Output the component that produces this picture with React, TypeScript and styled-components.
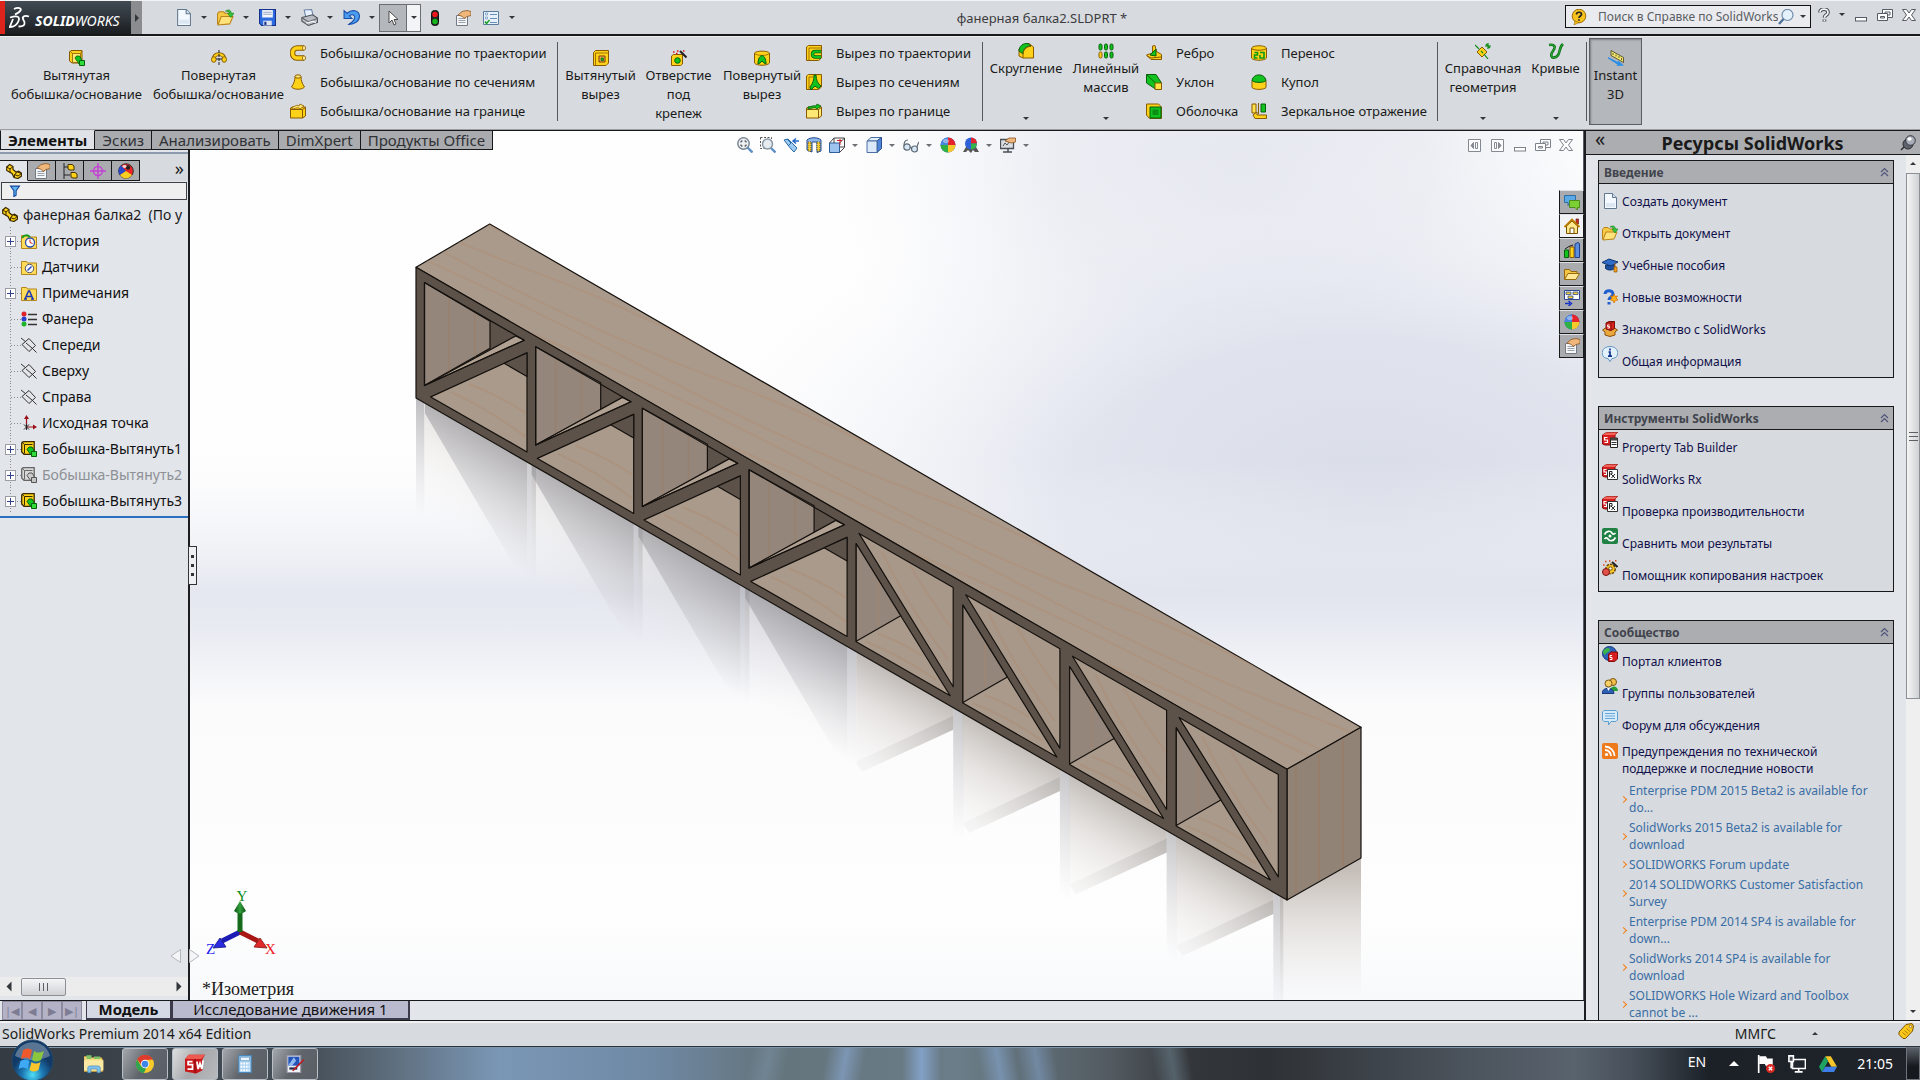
import React from "react";
import styled, { createGlobalStyle, css } from "styled-components";

const GlobalStyle = createGlobalStyle`
  * { box-sizing: border-box; }
  body { margin: 0; overflow: hidden; }
  button, input { font: inherit; color: inherit; }
  button { background: none; border: 0; padding: 0; cursor: default; }
  a { color: inherit; text-decoration: none; }
  ul { list-style: none; margin: 0; padding: 0; }
  h1, h2, p { margin: 0; }
`;

/* ---------- icons, all drawn on a 16 x 16 grid ---------- */

const Y = "#ffd21a";
const YD = "#8a5a00";
const G = "#12c21e";
const GD = "#08600c";

const icons: Record<string, React.ReactNode> = {
  newDoc: (
    <>
      <path d="M2.5.5h8l4 4v11h-12z" fill="#f4f9ff" stroke="#61788f" />
      <path d="M10.500.5v4h4" fill="#cfe0f0" stroke="#61788f" />
      <path d="M4 10h9v4H4z" fill="#dbe7f3" />
    </>
  ),
  open: (
    <>
      <path d="M.5 14.500V4.500l1.500-2h4l1.500 1.500h5v3" fill="#f6c945" stroke="#b9821a" />
      <path d="M1 15l3-8h11l-3 7z" fill="#ffe27a" stroke="#b9821a" />
      <path d="M8 2c3-2 5-1 5.500 2H16l-3 4-3-4h2C11.500 2.500 10 2 8 2z" fill="#35c63b" stroke="#128019" strokeWidth=".6" />
    </>
  ),
  save: (
    <>
      <path d="M.5.5h15v15h-13l-2-2z" fill="#2d6ce0" stroke="#16318a" />
      <path d="M3 1h10v7H3z" fill="#f4f6fb" />
      <path d="M4 3h8M4 5h8" stroke="#9aa8c4" />
      <path d="M4 11h8v4.500H4z" fill="#dfe4ee" />
      <path d="M5 12h2v3H5z" fill="#16318a" />
    </>
  ),
  print: (
    <>
      <path d="M3 1l7-.5 1.500 6-7 1z" fill="#e6f1ff" stroke="#6d84a8" />
      <path d="M.8 8L11 5.500l4.500 3v4L7 15.500l-6.200-4z" fill="#b9bcc2" stroke="#4d5259" />
      <path d="M1 8.500l6 3.500 8.500-3" fill="none" stroke="#63686f" />
      <path d="M5 13.500l6-2 3 1.500" fill="none" stroke="#fff" />
    </>
  ),
  undo: (
    <path
      d="M1 1.500v7.500h7.500L6 6.500C8.500 4.500 11.500 5.500 11 8.500c-.6 2.500-3 4-5.500 6C11 14.500 15.500 11.500 15.500 6.500 15 1 8.500 0 3.700 4z"
      fill="#4b9cf0"
      stroke="#1650a8"
    />
  ),
  cursor: <path d="M4 1v12l3-3 2 5 2-1-2-4.500h4z" fill="#fff" stroke="#3c3c3c" strokeWidth=".9" />,
  traffic: (
    <>
      <rect x="4.500" y=".5" width="7" height="15" rx="3" fill="#222" stroke="#111" />
      <circle cx="8" cy="4.500" r="2.700" fill="#f0151c" />
      <circle cx="8" cy="11.500" r="2.700" fill="#15b81c" />
    </>
  ),
  props: (
    <>
      <path d="M1.500 5.500h11v10h-11z" fill="#f5f6f8" stroke="#737a84" />
      <path d="M3.500 8.500h7M3.500 10.500h7M3.500 12.500h7" stroke="#98a0ab" />
      <path d="M3 5l4-3.500 5-1 4 1v4l-4 1-3 2-1.500-2L6 6z" fill="#efb77b" stroke="#8a5524" strokeWidth=".8" />
    </>
  ),
  options: (
    <>
      <path d="M.5 1.500h15v13H.5z" fill="#e7f1fb" stroke="#5b7c9e" />
      <path d="M7 4.500h7M7 8.500h7M7 12.500h7" stroke="#6b8fb6" />
      <path d="M2.500 3h2v2h-2zM2.500 7h2v2h-2z" fill="#fff" stroke="#6b8fb6" strokeWidth=".7" />
      <path d="M2 11.500l1.500 2 3-3.500" fill="none" stroke="#19a321" strokeWidth="1.500" />
    </>
  ),
  boss: (
    <>
      <path d="M.5 2l1.500-1.500h11V11l-2 2H3l-2.500-2z" fill={Y} stroke={YD} />
      <path d="M3.500 3.500h8v9h-8zM.8 1l2.700 2.500M11.500 3.500l1.500-2.500" fill="#ffe873" stroke={YD} strokeWidth=".8" />
      <path d="M6 8l1.500-2h3l2 3v2L10 14z" fill={G} stroke={GD} strokeWidth=".8" />
      <path d="M10.500 10.500h5v5h-5z" fill="#2fdc3a" stroke={GD} />
    </>
  ),
  revolve: (
    <>
      <path d="M2.500 9c1-6.500 10-6.500 11 0" fill="none" stroke={YD} strokeWidth="3.600" />
      <path d="M2.500 9c1-6.500 10-6.500 11 0" fill="none" stroke={Y} strokeWidth="2" />
      <ellipse cx="2.800" cy="9.500" rx="2.300" ry="2.800" fill={Y} stroke={YD} />
      <ellipse cx="13.200" cy="9.500" rx="2.300" ry="2.800" fill={Y} stroke={YD} />
      <path d="M5 9h6" stroke="#222" />
      <path d="M8 0v16" stroke="#222" strokeDasharray="3 1" />
    </>
  ),
  sweep: (
    <>
      <path d="M14 3H7C1 3 1 13 7 13h7" fill="none" stroke={YD} strokeWidth="5.500" />
      <path d="M14 3H7C1 3 1 13 7 13h7" fill="none" stroke={Y} strokeWidth="3.600" />
      <ellipse cx="14" cy="3" rx="1.600" ry="2.200" fill="#ffef9c" stroke={YD} strokeWidth=".8" />
      <ellipse cx="14" cy="13" rx="1.600" ry="2.200" fill="#ffef9c" stroke={YD} strokeWidth=".8" />
    </>
  ),
  loft: (
    <>
      <path d="M5 2.500C5 7 4 9 1.500 13c3 3 10 3 13 0C12 9 11 7 11 2.500z" fill={Y} stroke={YD} />
      <ellipse cx="8" cy="2.500" rx="3" ry="1.700" fill="#ffe873" stroke={YD} />
    </>
  ),
  boundary: (
    <>
      <path d="M.5 5l2-1h13v9l-3 2H.5z" fill={Y} stroke={YD} />
      <path d="M.5 6.500h12V15M12.500 6.500l3-2" fill="none" stroke={YD} />
      <path d="M2 4c3 0 4-3 7-1l1-2 4 2-4 3-1-1C7 4 5 6 2 6z" fill="#ffe873" stroke={YD} strokeWidth=".8" />
    </>
  ),
  cut: (
    <>
      <path d="M.5 2.500l2-2h13V13l-2.500 2.500H.5z" fill={Y} stroke={YD} />
      <path d="M2.500 3h13M2.500 3v12" stroke={YD} strokeWidth=".8" fill="none" />
      <path d="M6 6h6v6H6z" fill="#f0b060" stroke="#7a3a00" />
      <path d="M8 8h2.500v2.500H8z" fill={G} stroke={GD} strokeWidth=".7" />
    </>
  ),
  hole: (
    <>
      <path d="M.5 6l2-1.500h9V14l-2 1.500h-9z" fill={Y} stroke={YD} />
      <circle cx="6.500" cy="10.500" r="2.800" fill={G} stroke={GD} />
      <path d="M9 1l6.500 6.500" stroke="#222" strokeWidth="2" />
      <path d="M2 2h1.500M6 1h1.500M5 3.500h1.500M12 1h1.500" stroke="#e01616" strokeWidth="1.500" />
    </>
  ),
  revCut: (
    <>
      <path d="M.5 3v10c2 3 13 3 15 0V3c-2-2.500-13-2.500-15 0z" fill={Y} stroke={YD} />
      <path d="M.5 3.500c3 2.500 12 2.500 15 0" fill="none" stroke={YD} strokeWidth=".8" />
      <path d="M4 14c0-6 2-8 4-8.500C10 6 12 8 12 14l-2-1-2-2-2 2z" fill={G} stroke={GD} />
    </>
  ),
  sweepCut: (
    <>
      <path d="M.5 2l2-1.500h13V13l-3 2.500H.5z" fill={Y} stroke={YD} />
      <path d="M3 3h12M3 3v12" stroke={YD} strokeWidth=".8" fill="none" />
      <path d="M15 6.500H9.500c-4 0-4 5.500 0 5.500H15" fill="none" stroke={GD} strokeWidth="3.400" />
      <path d="M15 6.500H9.500c-4 0-4 5.500 0 5.500H15" fill="none" stroke={G} strokeWidth="2" />
    </>
  ),
  loftCut: (
    <>
      <path d="M.5 2l2-1.500h13V13l-3 2.500H.5z" fill={Y} stroke={YD} />
      <path d="M3 3h4M3 3v12" stroke={YD} strokeWidth=".8" fill="none" />
      <path d="M8 1h2c0 5 2 9 5 11l-2.500 2.500L9 12l-4 4-1-3C7 9 8 6 8 1z" fill={G} stroke={GD} />
    </>
  ),
  boundaryCut: (
    <>
      <path d="M.5 5l2-1h13v9l-3 2H.5z" fill="#ffe873" stroke={YD} />
      <path d="M.5 6.500h12V15M12.500 6.500l3-2" fill="none" stroke={YD} />
      <path d="M2 4c3 0 5-2 8-1l1-2 4 2-4 3-1-1C7 4 5 6 2 6z" fill={G} stroke={GD} strokeWidth=".8" />
    </>
  ),
  fillet: (
    <>
      <path d="M1 6l4-4 6-1.500L15.500 4v11H5L1 13z" fill={Y} stroke={YD} />
      <path d="M1 8c0-5 4-8 9-7.500L13 3C8 3 5 6 5 11z" fill={G} stroke={GD} />
      <path d="M5 15V11c0-4 3-7 8-8" fill="none" stroke={YD} />
    </>
  ),
  pattern: (
    <>
      {[2.5, 8, 13.5].map((x) =>
        [4, 12].map((y) => (
          <rect
            key={x + "-" + y}
            x={x - 1.5}
            y={y - 3}
            width="3"
            height="6"
            rx="1.400"
            fill={x === 2.5 && y === 12 ? Y : G}
            stroke={x === 2.5 && y === 12 ? YD : GD}
          />
        ))
      )}
    </>
  ),
  rib: (
    <>
      <path d="M.5 10l6-2V1L9 .5l1.500 6 5 3v5H5z" fill={Y} stroke={YD} />
      <path d="M4 10l6-6v7z" fill={G} stroke={GD} />
      <path d="M1 11l4 2 10-1" stroke={YD} fill="none" />
    </>
  ),
  draft: (
    <>
      <path d="M.5.5h9.500l5.500 8.500-6 6-9-6z" fill={G} stroke={GD} />
      <path d="M.5.5L9.500 9" stroke={GD} />
      <path d="M9 9h6.500v6.500H9z" fill="#ffe14a" stroke={YD} />
    </>
  ),
  shell: (
    <>
      <path d="M.5 1h12l3 3v11.500h-12L.5 12z" fill={Y} stroke={YD} />
      <path d="M4 4h11v11H4z" fill={G} stroke={GD} />
      <path d="M6.500 6.500h6V12h-6z" fill="#0a8f14" />
    </>
  ),
  wrap: (
    <>
      <path d="M.5 3v10c2 3 13 3 15 0V3c-2-3-13-3-15 0z" fill={Y} stroke={YD} />
      <path d="M.5 3.500c3 2.300 12 2.300 15 0" fill="none" stroke={YD} />
      <path d="M3.500 7.500h3v2.500h-3v3h3M9 7.500h4v5.500H9v-3" fill="none" stroke="#0a9a14" strokeWidth="1.600" />
    </>
  ),
  dome: (
    <>
      <path d="M1 6.500v7c2 2.500 12 2.500 14 0v-7z" fill={Y} stroke={YD} />
      <path d="M1 6.500C2-1 14-1 15 6.500c-2 2.500-12 2.500-14 0z" fill={G} stroke={GD} />
    </>
  ),
  mirror: (
    <>
      <path d="M1 1h4v9H1z" fill="#ffe14a" stroke={YD} />
      <path d="M10 1h4.500v8H10z" fill={G} stroke={GD} />
      <path d="M2 12l4-3v3h9.500v3.500H4z" fill={Y} stroke={YD} />
      <path d="M7.500 0v11" stroke={YD} />
    </>
  ),
  refGeom: (
    <>
      <path d="M7 4l5 5-5 5-5-5z" fill={Y} stroke={YD} />
      <path d="M0 2l4 4M9 11l4 5M6 8l2 2M13 0v6M10 3h6M11 1l4 4" stroke="#0d8b14" strokeWidth="1.200" />
    </>
  ),
  curves: (
    <>
      <path d="M1 2c6-1 7 2 4 6s-2 8 3 6 2-9 7-13" fill="none" stroke="#0b7014" strokeWidth="2.600" />
      <path d="M1 2c6-1 7 2 4 6s-2 8 3 6 2-9 7-13" fill="none" stroke="#2cb33a" strokeWidth="1" />
    </>
  ),
  instant: (
    <>
      <path d="M3 .5l12.500 7v5L3 5.500z" fill="#f5e96b" stroke="#3e3a20" strokeWidth=".8" />
      <path d="M5 3v2M8 4.500v2M11 6v2M13.500 8v2" stroke="#3e3a20" strokeWidth=".8" />
      <path d="M0 7l10 5v-1.500l6 5-7.500.5 1-1.500-9.500-6z" fill="#2b8fe6" />
    </>
  ),
  part: (
    <>
      <path d="M.7 4l3-2.500L7 3.500V6.500l3 2.500 2.500-.8 3 2V13l-3.500 2.500-4-1-2-4-5.300-3z" fill={Y} stroke="#3a2900" strokeWidth="1.200" />
      <path d="M.7 4L4 6v3.500M4 6l3-2.500M8.500 11.500l3-2.500 4 1.500M8.500 11.500v3M8.500 11.500l3.500 1.500 3.500-2.500" fill="none" stroke="#3a2900" />
    </>
  ),
  config: (
    <>
      <path d="M2 0v16M2 4h4M2 12h6" stroke="#222" fill="none" />
      <path d="M6 1.500h4l2 1.500v4H8L6 6z" fill={Y} stroke="#4a3400" />
      <path d="M9 9.500h4l2 1.500v4h-4L9 14z" fill={Y} stroke="#4a3400" />
    </>
  ),
  target: (
    <g fill="none" stroke="#c63fd6" strokeWidth="1.400">
      <circle cx="8" cy="8" r="4.500" />
      <path d="M8 0v16M0 8h16" />
    </g>
  ),
  ball: (
    <>
      <circle cx="8" cy="8" r="7.500" fill="#2f62d8" />
      <path d="M8 8V.5A7.500 7.500 0 0 1 15.500 8z" fill="#e5232b" />
      <path d="M8 8H.5A7.500 7.500 0 0 0 8 15.500z" fill="#2fb045" />
      <path d="M8 8v7.500A7.500 7.500 0 0 0 15.500 8z" fill="#f3c92b" />
      <path d="M8 8H.5A7.500 7.500 0 0 1 8 .5z" fill="#4a86e0" />
      <ellipse cx="6" cy="4" rx="3" ry="2" fill="#fff" opacity=".4" />
    </>
  ),
  ballDark: (
    <>
      <circle cx="8" cy="8" r="7.300" fill="#e22" stroke="#333" />
      <path d="M8 8L3 2.500C0 5 0 10 2 12z" fill="#2448c8" />
      <path d="M8 8l-6 4c3 4.500 9 4.500 12 0z" fill="#f6cf22" />
      <circle cx="10" cy="4.500" r="2.200" fill="#222" />
      <ellipse cx="6.500" cy="3.500" rx="2" ry="1.400" fill="#fff" opacity=".8" />
    </>
  ),
  filter: <path d="M2 1.500h12l-4.500 6v6l-3 2v-8z" fill="#5fb4f2" stroke="#12459b" strokeWidth="1.400" />,
  history: (
    <>
      <path d="M.5 2.500h5l1 1.500h9v11.500H.5z" fill="#ffdc5c" stroke="#b3851a" />
      <circle cx="9" cy="9.500" r="4.500" fill="#fff" stroke="#2a4ab0" strokeWidth="1.300" />
      <path d="M9 6.500v3l2.500 1" fill="none" stroke="#d02020" />
      <path d="M1 5c3-4 6-3 8-1" fill="none" stroke="#149a1e" strokeWidth="1.800" />
    </>
  ),
  sensors: (
    <>
      <path d="M.5 2.500h5l1 1.500h9v11.500H.5z" fill="#ffdc5c" stroke="#b3851a" />
      <circle cx="8.500" cy="9.500" r="4.200" fill="#f4f6fa" stroke="#556" />
      <path d="M6.500 11.500l4-4" stroke="#2448c8" strokeWidth="1.400" />
    </>
  ),
  notes: (
    <>
      <path d="M.5 2.500h5l1 1.500h9v11.500H.5z" fill="#ffdc5c" stroke="#b3851a" />
      <path d="M4 14l3.500-8h1L12 14M5.500 11.500h5M3 14h3M10 14h3" fill="none" stroke="#1b36b4" strokeWidth="1.500" />
    </>
  ),
  material: (
    <>
      <circle cx="3" cy="3" r="2.500" fill="#e0242c" />
      <circle cx="3" cy="8" r="2.500" fill="#2a3fd0" />
      <circle cx="3" cy="13" r="2.500" fill="#1cb52a" />
      <path d="M7 3.500h9M7 8.500h9M7 13.500h9" stroke="#333" strokeWidth="1.500" />
    </>
  ),
  plane: (
    <>
      <path d="M8 1.500l6.500 7-6.500 6-7-7z" fill="none" stroke="#333" />
      <path d="M0 1l5 4M11 11l4.500 4.500M5 6l6 5" stroke="#333" />
    </>
  ),
  origin: (
    <>
      <path d="M5.500 12V2M5.500 12H14" stroke="#9b1018" strokeWidth="1.200" />
      <path d="M3 4l2.500-4L8 4zM12 9.500l4 2.500-4 2.500z" fill="#9b1018" />
      <path d="M3 9.500l5 5M8 9.500l-5 5M5.500 9v6" stroke="#222" />
    </>
  ),
  feature: (
    <>
      <path d="M.7 2l1.500-1.300h11V11l-2 2.300H3L.7 11z" fill={Y} stroke="#3a2a00" strokeWidth="1.300" />
      <path d="M3.500 3.500h8M3.500 3.500v9M.8 1l2.700 2.500" stroke="#3a2a00" />
      <path d="M6 8.500l2-2.500h3l2 3v2l-3 3z" fill={G} stroke={GD} />
      <path d="M10.500 10.500h5v5h-5z" fill="#2fdc3a" stroke={GD} />
    </>
  ),
  featureOff: (
    <>
      <path d="M.7 2l1.500-1.300h11V11l-2 2.300H3L.7 11z" fill="#d8d8d8" stroke="#666" strokeWidth="1.300" />
      <path d="M3.500 3.500h8M3.500 3.500v9M.8 1l2.700 2.500" stroke="#666" />
      <path d="M6 8.500l2-2.500h3l2 3v2l-3 3z" fill="#ccc" stroke="#555" />
      <path d="M10.500 10.500h5v5h-5z" fill="#c4c4c4" stroke="#555" />
    </>
  ),
  zoomFit: (
    <>
      <circle cx="6.500" cy="6.500" r="5.700" fill="#eef2f6" stroke="#7b8794" strokeWidth="1.500" />
      <path d="M4 5.500V4h1.500M7.500 4H9v1.500M9 7.500V9H7.500M5.500 9H4V7.500" fill="none" stroke="#333" />
      <path d="M10.500 10.500l5 5" stroke="#5f8fc4" strokeWidth="2.400" />
    </>
  ),
  zoomArea: (
    <>
      <path d="M.5.5h11v11H.5z" fill="none" stroke="#555" strokeDasharray="2 1.500" />
      <circle cx="7.500" cy="7" r="5" fill="#e6ebf0" stroke="#8b97a3" strokeWidth="1.500" />
      <path d="M11 11l4.500 4.500" stroke="#5f8fc4" strokeWidth="2.400" />
    </>
  ),
  prevView: (
    <>
      <path d="M1 3l4-1 9 9-3 4-3-3z" fill="#9ccaf0" stroke="#2b6aa8" />
      <path d="M4 2l4 4-3 3" fill="none" stroke="#2b6aa8" />
      <path d="M16 4h-5M13 1.500L10 4l3 2.500" fill="none" stroke="#2469c8" strokeWidth="1.500" />
    </>
  ),
  section: (
    <>
      <path d="M1 3c3-3 11-3 14 0v11l-4 1.500V5H6v10L1 13z" fill="#8fb8ea" stroke="#244a8a" />
      <path d="M2 5h3v9H2zM11 5h3v9h-3z" fill="#f4cf3a" stroke="#665010" strokeDasharray="1 1" />
    </>
  ),
  orient: (
    <>
      <path d="M5 1h10.500v9" fill="none" stroke="#444" />
      <path d="M.5 6h10v9.500H.5z" fill="#9cc4ee" stroke="#2c5f9c" />
      <path d="M.5 6L5 1M10.500 6l5-5M10.500 15.500l5-5M5 1v5M10.500 10H16" fill="none" stroke="#444" />
      <path d="M8 3.500h5M11 2v6" stroke="#d02020" />
    </>
  ),
  display: (
    <>
      <path d="M1 4l4-3.500h10.500L11 4z" fill="#e3effc" stroke="#4b6ea3" />
      <path d="M11 4l4.500-3.500v11L11 15.500z" fill="#4f86d8" stroke="#2c4f91" />
      <path d="M1 4h10v11.500H1z" fill="#dbe9fb" stroke="#4b6ea3" />
    </>
  ),
  glasses: (
    <g fill="none" stroke="#5f6b78" strokeWidth="1.200">
      <circle cx="4" cy="10" r="3.200" fill="#d7e6f5" />
      <circle cx="11.500" cy="12" r="3" fill="#d7e6f5" />
      <path d="M7 10l2 1M1 9c0-4 1-6 4-6M14 10c1-4 1-4 2-5" />
    </g>
  ),
  scene: (
    <>
      <path d="M0 15l3-5h10l3 5h-4l-2-2-2 3-3-3-2 2z" fill="#555" />
      <circle cx="8" cy="6.500" r="6" fill="#2f62d8" />
      <path d="M8 6.500V.5a6 6 0 0 1 6 6z" fill="#e5232b" />
      <path d="M8 6.500v6a6 6 0 0 0 6-6z" fill="#35b44a" />
    </>
  ),
  viewSet: (
    <>
      <path d="M.5 2.500h13v9H.5z" fill="#d9dde2" stroke="#4a4f57" strokeWidth="1.300" />
      <path d="M3 9l2-3 2 2 3-4" stroke="#555" fill="none" />
      <path d="M3 15h9M8 12v3" stroke="#4a4f57" strokeWidth="1.500" />
      <path d="M5 4l4-3h6.500v4l-4 1z" fill="#efb77b" stroke="#8a5524" strokeWidth=".8" />
    </>
  ),
  helpBubble: (
    <>
      <circle cx="8" cy="7" r="6.800" fill="#f7c21e" stroke="#9a6a00" />
      <path d="M4 12l-1 4 5-2.500z" fill="#f7c21e" stroke="#9a6a00" strokeWidth=".6" />
      <path d="M5.500 5.500C5.500 2.500 10.500 2.500 10.500 5.500 10.500 7 8 7 8 9M8 10.200v1.600" fill="none" stroke="#222" strokeWidth="1.700" />
    </>
  ),
  lens: (
    <>
      <circle cx="9.500" cy="6" r="5.500" fill="#e5f1fb" stroke="#6f8dac" strokeWidth="1.200" />
      <path d="M5.500 10L1 15" stroke="#4c6f95" strokeWidth="2.200" />
    </>
  ),
  question: (
    <>
      <path d="M3.500 5C3 0 13 0 12.500 5 12.500 8 8.500 8 8.500 11M8.500 13v2.500" fill="none" stroke="#444b54" strokeWidth="4.200" />
      <path d="M3.500 5C3 0 13 0 12.500 5 12.500 8 8.500 8 8.500 11M8.500 13.500v1.500" fill="none" stroke="#f4f5f7" strokeWidth="2" />
    </>
  ),
  min: <rect x="2.500" y="10.500" width="11" height="3.500" fill="#fff" stroke="#555c66" />,
  restore: (
    <g fill="#fff" stroke="#555c66">
      <path d="M5.500 2.500h10v8h-10z" />
      <path d="M8 5h5v3H8z" />
      <path d="M.5 6.500h10v7H.5z" />
      <path d="M3.500 9.500h4v1.500h-4z" />
    </g>
  ),
  close: (
    <path d="M1.500 2.500h4L8 6l2.500-3.500h4L10.500 8l4 5.500h-4L8 10l-2.500 3.500h-4l4-5.500z" fill="#fff" stroke="#555c66" />
  ),
  paneLeft: (
    <g fill="none" stroke="#5f6670">
      <path d="M2.500 2.500h12v12h-12z" fill="#fff" />
      <path d="M9.500 5.500h2v6h-2z" />
      <path d="M7.500 5.500v6L5 8.500z" fill="#5f6670" />
    </g>
  ),
  paneRight: (
    <g fill="none" stroke="#5f6670">
      <path d="M2.500 2.500h12v12h-12z" fill="#fff" />
      <path d="M5.500 5.500h2v6h-2z" />
      <path d="M9.500 5.500v6L12 8.500z" fill="#5f6670" />
    </g>
  ),
  pin: (
    <>
      <path d="M1 15l5-5" stroke="#333" strokeWidth="1.600" />
      <circle cx="8" cy="9" r="5" fill="#60636c" stroke="#2a2c33" />
      <circle cx="10.500" cy="5.500" r="4.800" fill="#a9adba" stroke="#33353d" />
      <ellipse cx="9.500" cy="4" rx="2.200" ry="1.700" fill="#fff" />
    </>
  ),
  chat: (
    <>
      <path d="M.5 1.500h11v7H6l-2 3v-3H.5z" fill="#5aa9e6" stroke="#2f6fa8" />
      <path d="M5.500 6.500h10v7h-2v2.500l-2.500-2.500H5.500z" fill="#7bd134" stroke="#4b8c1c" />
    </>
  ),
  house: (
    <>
      <path d="M12 1h2.500v5H12z" fill="#c8322a" stroke="#6b1812" strokeWidth=".7" />
      <path d="M2.500 8v7.500h11V8L8 3z" fill="#ffe98c" stroke="#7a5200" />
      <path d="M.5 9L8 1.500 15.500 9" fill="none" stroke="#b97b00" strokeWidth="1.800" />
      <path d="M6 10h4v5.500H6z" fill="#fff" stroke="#7a5200" />
    </>
  ),
  library: (
    <>
      <path d="M.5 8h4v7.500h-4z" fill={G} stroke={GD} />
      <path d="M6 5h4v10.500H6z" fill={Y} stroke={YD} />
      <path d="M11 2l3-1.500 1.500 1V15.500H11z" fill="#5b8de0" stroke="#1f3f86" />
      <path d="M1 7l3-2 2-1 3-1" stroke="#222" fill="none" />
    </>
  ),
  folder: (
    <>
      <path d="M.5 13.500V3.500h5l1.500 2h6v2" fill="#f3c544" stroke="#96690e" />
      <path d="M.5 13.500L4 7.500h11.500l-3.500 6z" fill="#ffe795" stroke="#96690e" />
    </>
  ),
  palette: (
    <>
      <path d="M.5.5h15v9H.5z" fill="#fff" stroke="#2d4a8e" />
      <path d="M2 2h5v2.500H2zM9 2h5v2.500H9zM4 6h5v2.500H4z" fill="#f6cf3a" stroke="#2d4a8e" strokeWidth=".8" />
      <path d="M1 13.500h5M4.500 11l3 2.500-3 2.500" fill="none" stroke="#1430c8" strokeWidth="1.500" />
    </>
  ),
  hat: (
    <>
      <path d="M0 5.500L7 2l9 3-7 4z" fill="#2d6cc8" stroke="#12356e" />
      <path d="M3.500 8v3.500c2 2 7 2 9 0V7.500L9 9z" fill="#1c4f9f" stroke="#12356e" />
      <path d="M13 6v4" stroke="#b86a10" />
      <path d="M12 10h3v5h-3z" fill="#f0a01e" stroke="#97550a" strokeWidth=".7" />
    </>
  ),
  whatsNew: (
    <>
      <path d="M3 5C3 .5 11 .5 11 5c0 3-4 3-4 6M7 13v2.500" fill="none" stroke="#1f5fd0" strokeWidth="3" />
      <path d="M12 5l1 2.500L15.500 7 14 9l2 2-2.500.3L12 14l-1-2.500L8.500 11 10 9 8.500 7l2.500.5z" fill="#ffb21a" stroke="#d86a00" strokeWidth=".7" />
    </>
  ),
  intro: (
    <>
      <path d="M.5 9l3-2 4.500 2.500L12.500 7l3 2-2.500 2v3L8 15.500 3 14v-3z" fill="#eaa83c" stroke="#8a4f0c" />
      <path d="M4 2l3-1.500h5.500V7.500L9 9.500 4 8z" fill="#d8261f" stroke="#7c0f0a" />
      <path d="M4 2h5v7M9 2l3.500-1.500" fill="none" stroke="#7c0f0a" strokeWidth=".7" />
      <path d="M7.500 4h-2v1.500h2V7h-2" stroke="#fff" strokeWidth=".9" fill="none" />
    </>
  ),
  info: (
    <>
      <path d="M8 .5c10 0 10 12 2 12L8 15.500 6 12.500C-2 12.500-2 .5 8 .5z" fill="#e3f1fc" stroke="#5f93c4" />
      <path d="M8 2.500v2M6.500 6H8v4M6 10.200h4" fill="none" stroke="#14348a" strokeWidth="1.700" />
    </>
  ),
  ptb: (
    <>
      <path d="M.5 3l4-2.500h11L13 3v10H3L.5 12z" fill="#d81f1f" stroke="#8a0c0c" />
      <path d="M.5 3l4-2.500h11L13 3z" fill="#f0645a" />
      <path d="M5.500 5.500h-3v2.500h3v2.500h-3" stroke="#fff" fill="none" strokeWidth="1.200" />
      <path d="M8.500 6.500h7v9h-7z" fill="#fff" stroke="#222" />
      <path d="M8.500 6h7v2h-7zM9.500 10.500h5M9.500 12.500h5" stroke="#333" fill="#555" />
    </>
  ),
  rx: (
    <>
      <path d="M.5 3l4-2.500h11L13 3v10H3L.5 12z" fill="#d81f1f" stroke="#8a0c0c" />
      <path d="M.5 3l4-2.500h11L13 3z" fill="#f0645a" />
      <path d="M4.500 5.500h-2.500v2.500h2.500v2.500h-2.500" stroke="#fff" fill="none" strokeWidth="1.200" />
      <path d="M5.500 5.500h10v10h-10z" fill="#fff" stroke="#333" />
      <path d="M7.500 13V7.500h2.500v2.500H7.500M9 10l4 4M13 10l-3.500 4" stroke="#222" fill="none" />
    </>
  ),
  compare: (
    <>
      <rect width="16" height="16" rx="2" fill="#1f8244" />
      <path d="M2.500 6.500c2-4 6-4 7.500-1.500 1 1.500 2 1.500 3.500 0M13.500 9.500c-2 4-6 4-7.500 1.500-1-1.500-2-1.500-3.500 0" fill="none" stroke="#fff" strokeWidth="1.700" />
      <circle cx="8" cy="8" r="1.500" fill="#fff" />
    </>
  ),
  wizard: (
    <>
      <circle cx="8.500" cy="9" r="4.700" fill="#f6c529" stroke="#6b4800" strokeDasharray="2.500 1" strokeWidth="1.500" />
      <circle cx="4" cy="12" r="3.500" fill="#e0514a" stroke="#7c1410" />
      <circle cx="8.500" cy="8.500" r="1.700" fill="#fff" stroke="#6b4800" />
      <path d="M10 2l5.500 5" stroke="#222" strokeWidth="2" />
      <path d="M3 1.500h1.500M7 1h1.500M1 5h1.500M13 .800h1.500" stroke="#e04a16" strokeWidth="1.500" />
    </>
  ),
  portal: (
    <>
      <circle cx="7.500" cy="7.500" r="7" fill="#2c62b8" stroke="#173a78" />
      <path d="M3 3c3-2 5-1 5 1S4 6 3 9C0 7 1 4 3 3z" fill="#3db54a" />
      <path d="M6.500 8l3-2h6v7l-3 2.500h-6z" fill="#d81f1f" stroke="#7c0c0c" />
      <path d="M10 9.500H8v2h2v2H8" stroke="#fff" fill="none" />
    </>
  ),
  groups: (
    <>
      <circle cx="11" cy="4" r="3.500" fill="#f2bf4c" stroke="#7b5510" />
      <path d="M8 13c0-6 8-6 8 0z" fill="#28a03a" />
      <circle cx="6.500" cy="5.500" r="3.500" fill="#f7cf67" stroke="#7b5510" />
      <path d="M0 15.500c0-7 12-7 12 0z" fill="#2d5fb4" stroke="#173a78" />
      <path d="M5 10l1.500 3L8 10z" fill="#fff" />
    </>
  ),
  forum: (
    <>
      <path d="M2 .5h12l1.500 1.500v8L14 11.500H9L6.500 15v-3.500H2L.5 10V2z" fill="#d6ebfa" stroke="#5f9fd0" />
      <path d="M3 3.500h10M3 6h10M3 8.500h10" stroke="#6aa5d8" />
    </>
  ),
  rss: (
    <>
      <rect width="16" height="16" rx="2" fill="#ee7a1c" />
      <circle cx="4.500" cy="11.500" r="1.600" fill="#fff" />
      <path d="M3 7a6 6 0 0 1 6 6M3 3.500A9.500 9.500 0 0 1 12.500 13" fill="none" stroke="#fff" strokeWidth="1.800" />
    </>
  ),
  tag: (
    <>
      <path d="M1 9L8 1.500l6-1L15.500 3 14.500 8l-7 7.500H5L1 11.500z" fill="#fbc81e" stroke="#7c5200" />
      <path d="M4.500 9.500l3.500 3M6.500 7.500l3.500 3M8.500 5.500l3.500 3" stroke="#b37b00" />
      <circle cx="12.500" cy="3.500" r="1.200" fill="#fff" stroke="#7c5200" strokeWidth=".7" />
    </>
  ),
  flag: (
    <>
      <path d="M1.500 0v16" stroke="#fff" strokeWidth="1.500" />
      <path d="M2 1h6l1 2h5v7H8L7 8H2z" fill="#fff" />
      <circle cx="12" cy="12" r="4" fill="#d8281f" />
      <path d="M10.500 10.500l3 3M13.500 10.500l-3 3" stroke="#fff" strokeWidth="1.300" />
    </>
  ),
  network: (
    <g fill="none" stroke="#fff" strokeWidth="1.400">
      <path d="M4 4h11.500v8H4z" fill="#20262c" />
      <path d="M6 15h7M9.500 12v3" />
      <path d="M.8.800h4v5h-4zM2.800 6v5H4" fill="#454b52" />
    </g>
  ),
  drive: (
    <>
      <path d="M5.500 1h5l5.500 9.500h-5z" fill="#f8c62b" />
      <path d="M5.500 1L8 5.500 2.700 15 0 10.500z" fill="#1ea362" />
      <path d="M5.500 10.500H16L13.300 15H2.700z" fill="#3f7de8" />
    </>
  ),
  explorer: (
    <>
      <path d="M0 2h5l1 1h8l1 2v9H0z" fill="#f6dc80" stroke="#c79a35" strokeWidth=".6" />
      <path d="M2 1h4v3H2zM8 2h5v2H8z" fill="#7ec36a" />
      <path d="M0 5h15.500v8H0z" fill="#fbeaa3" />
      <path d="M3 15v-4c0-1 1-1.500 2-1.500h6c1 0 2 .5 2 1.500v4h-2.500v-3h-5v3z" fill="#7fc1ec" stroke="#3f87bf" strokeWidth=".5" />
    </>
  ),
  chrome: (
    <>
      <circle cx="8" cy="8" r="8" fill="#f6ca2b" />
      <path d="M1 4a8 8 0 0 1 14 0L8.500 4.500 5 9z" fill="#dd3b2d" />
      <path d="M1 4l3.500 6 4.500 2-2 4A8 8 0 0 1 1 4z" fill="#2fa34d" />
      <circle cx="8" cy="8" r="3.700" fill="#fff" />
      <circle cx="8" cy="8" r="3" fill="#3f86e8" />
    </>
  ),
  sw: (
    <>
      <path d="M0 4l3-3.500h13L14 4v9l-5 2.500L0 14z" fill="#c8171a" />
      <path d="M0 4l3-3.500h13L13 4z" fill="#ef5a50" />
      <path d="M8 4v11.500" stroke="#7c0c0c" strokeWidth=".8" />
      <path d="M6 6H2.500v2.500H6V12H2M9.500 6l1 6 1.500-4.500L13.500 12l1-7" fill="none" stroke="#fff" strokeWidth="1.400" />
    </>
  ),
  calc: (
    <>
      <path d="M2.500.5h11v15h-11z" fill="#a9d2f2" stroke="#4b86b8" />
      <path d="M4 2h8v3H4z" fill="#eef7ff" stroke="#4b86b8" strokeWidth=".5" />
      <path d="M4 7.500h8M4 10.500h8M4 13.500h8" stroke="#fff" strokeWidth="1.800" strokeDasharray="1.600 .8" />
    </>
  ),
  paint: (
    <>
      <path d="M1 .5h12v15H1z" fill="#eef2f7" stroke="#99a" />
      <path d="M2 1.500h10v8H2z" fill="#2454b8" />
      <path d="M2 9l5-7 2 3-4 5z" fill="#8fb8f0" />
      <path d="M3 11h7v2H3z" fill="#222a4a" />
      <path d="M16 4l-7 7-3 3" stroke="#b8202a" strokeWidth="1.500" />
    </>
  ),
};

const Svg = styled.svg`
  display: block;
  flex: none;
`;

const Icon = ({ name, size = 16 }: { name: string; size?: number }) => (
  <Svg width={size} height={size} viewBox="0 0 16 16" aria-hidden="true">
    {icons[name]}
  </Svg>
);

const Caret = styled.span<{ $up?: boolean; $light?: boolean }>`
  flex: none;
  width: 0;
  height: 0;
  border: 3px solid transparent;
  border-bottom-width: 0;
  border-top-color: ${(p) => (p.$light ? "#fff" : "#33363b")};
  ${(p) => p.$light && "border-width: 5px 5px 0;"}
  ${(p) => p.$up && "transform: rotate(180deg);"}
`;

/* ---------- frame ---------- */

const Frame = styled.div`
  display: flex;
  flex-direction: column;
  height: 100vh;
  background: #d7dade;
  color: #1a1a1a;
  font-family: "Noto Sans", "Open Sans", sans-serif;
  font-size: 13px;
  overflow: hidden;
`;

const TitleBar = styled.header`
  flex: none;
  display: flex;
  align-items: stretch;
  height: 36px;
  border-top: 1px solid #f2f3f5;
  border-bottom: 2px solid #17181a;
`;

const Brand = styled.div`
  display: flex;
  align-items: center;
  gap: 5px;
  width: 131px;
  padding-left: 4px;
  border-left: 5px solid #dc241c;
  background: linear-gradient(#414b54, #2a3036 60%, #1a1d20);
  color: #fff;
  font-size: 14px;
  font-style: italic;
  white-space: nowrap;

  b { font-weight: 700; }
  span { padding-top: 6px; }
`;

const BrandArrow = styled.button`
  display: flex;
  align-items: center;
  justify-content: center;
  width: 11px;
  background: #8b8c8f;

  span { transform: rotate(-90deg); border-width: 4px 4px 0; }
`;

const QuickBar = styled.nav`
  display: flex;
  align-items: center;
  padding-left: 27px;
`;

const QuickButton = styled.button<{ $pressed?: boolean }>`
  display: flex;
  align-items: center;
  justify-content: center;
  width: 28px;
  height: 28px;
  ${(p) => p.$pressed && css`background: #b4b7bb; border: 1px solid #6b6e73;`}
`;

const QuickCaret = styled(QuickButton)`
  width: 14px;
  ${(p) => p.$pressed && css`background: #f3f4f6; border-left: 0;`}
`;

const DocTitle = styled.h1`
  flex: 1;
  align-self: center;
  text-align: center;
  font-size: 13px;
  font-weight: 400;
  color: #3c3c3e;
`;

const SearchBox = styled.label`
  display: flex;
  align-items: center;
  align-self: center;
  width: 246px;
  height: 23px;
  margin: 0 6px 2px 0;
  padding: 0 4px 0 5px;
  border: 1px solid #111;
  background: #e9ebef;

  input {
    flex: 1;
    min-width: 0;
    border: 0;
    padding: 0 0 0 11px;
    background: none;
    font-size: 12px;
    outline: 0;
  }
  input::placeholder { color: #5a5d62; opacity: 1; }
  ${Caret} { margin-left: 6px; }
`;

const WindowButtons = styled.div<{ $gap: number }>`
  display: flex;
  align-items: center;
  gap: ${(p) => p.$gap}px;
`;

const AppButtons = styled(WindowButtons)`
  padding: 0 3px 6px 0;
`;

/* ---------- ribbon ---------- */

const Ribbon = styled.section`
  flex: none;
  display: flex;
  height: 95px;
  padding: 1px 0 5px 6px;
  border-top: 1px solid #eceef0;
  border-bottom: 1px solid #17181a;
  box-shadow: inset 0 -1px #9c9ea2;
`;

const Divider = styled.span<{ $gap: number }>`
  flex: none;
  width: 1px;
  margin: 4px ${(p) => p.$gap}px 4px 0;
  background: #55585c;
`;

const BigButton = styled.button<{ $w: number; $menu?: boolean; $pressed?: boolean }>`
  flex: none;
  display: flex;
  flex-direction: column;
  align-items: center;
  width: ${(p) => p.$w}px;
  padding-top: ${(p) => (p.$menu ? 5 : 12)}px;
  font-size: 13px;
  line-height: 19px;
  text-align: center;

  ${Caret} { margin: auto 0 5px; }
  ${(p) => p.$pressed && css`
    background: #b4b7bb;
    border: 1px solid #5c5f63;
    box-shadow: inset 1px 1px 2px #7d8084;
    padding-top: 11px;
  `}
`;

const CommandList = styled.ul<{ $w: number }>`
  flex: none;
  width: ${(p) => p.$w}px;
`;

const CommandButton = styled.button`
  display: flex;
  align-items: center;
  gap: 14px;
  height: 29px;
  font-size: 13px;
  white-space: nowrap;
`;

/* ---------- work area ---------- */

const WorkArea = styled.div`
  flex: 1;
  min-height: 0;
  display: flex;
`;

const DocumentArea = styled.main`
  position: relative;
  flex: 1;
  min-width: 0;
  display: flex;
  flex-direction: column;
`;

const DocumentRow = styled.div`
  flex: 1;
  min-height: 0;
  display: flex;
`;

const CommandTabs = styled.nav`
  position: absolute;
  top: -1px;
  left: 0;
  z-index: 2;
  display: flex;
`;

const CommandTab = styled.button<{ $active?: boolean }>`
  height: 20px;
  padding: 0 7px;
  border: 1px solid #17181a;
  border-left-width: ${(p) => (p.$active ? 1 : 0)}px;
  background: #a9abaf;
  color: #303236;
  font-size: 15px;
  line-height: 16px;
  ${(p) => p.$active && css`
    border-top-color: #d7dade;
    background: #dfe2e7;
    color: #111;
    font-weight: 700;
  `}
`;

const TreePanel = styled.aside`
  flex: none;
  display: flex;
  flex-direction: column;
  width: 190px;
  padding-top: 21px;
  border-right: 2px solid #1c1d20;
  background: #e2e5ea;
  overflow: hidden;
`;

const ManagerTabs = styled.div`
  flex: none;
  display: flex;
  height: 29px;
  padding-top: 6px;
  border-top: 2px solid #8d9aae;
  background: #d7dade;

  > span {
    margin-left: auto;
    padding-right: 4px;
    font-size: 18px;
    line-height: 16px;
  }
`;

const ManagerTab = styled.button<{ $active?: boolean }>`
  display: flex;
  align-items: center;
  justify-content: center;
  width: 28px;
  border: 1px solid #17181a;
  border-left: 0;
  background: ${(p) => (p.$active ? "#e2e5ea" : "#a9abaf")};
  ${(p) => p.$active && "border-bottom-color: #e2e5ea;"}
`;

const FilterBox = styled.label`
  flex: none;
  display: flex;
  align-items: center;
  height: 18px;
  margin: 1px;
  padding-left: 7px;
  border: 1px solid #3d3f44;
  background: #efeff0;

  svg { width: 12px; height: 12px; }
  input { flex: 1; min-width: 0; border: 0; padding: 0 4px; background: none; outline: 0; }
`;

const Tree = styled.ul`
  flex: none;
  font-size: 14px;
  white-space: nowrap;
  border-bottom: 2px solid #2b6fbf;
  padding-bottom: 3px;
`;

const TreeRoot = styled.li`
  display: flex;
  align-items: center;
  gap: 5px;
  height: 26px;
  padding-left: 2px;
`;

const TreeItem = styled.li<{ $muted?: boolean }>`
  display: flex;
  align-items: center;
  height: 26px;
  padding-left: 5px;
  color: ${(p) => (p.$muted ? "#8d9095" : "#111")};
  background:
    repeating-linear-gradient(#8a8d92 0 1px, transparent 1px 3px) 10px 0 / 1px 100% no-repeat,
    repeating-linear-gradient(90deg, #8a8d92 0 1px, transparent 1px 3px) 11px 14px / 10px 1px no-repeat;

  > svg { margin: 2px 5px 0 0; }
`;

const Expander = styled.button<{ $hidden?: boolean }>`
  width: 11px;
  height: 11px;
  margin: 3px 5px 0 0;
  border: 1px solid #9a9da3;
  background:
    linear-gradient(#34418c, #34418c) center / 7px 1px no-repeat,
    linear-gradient(#34418c, #34418c) center / 1px 7px no-repeat,
    #fff;
  ${(p) => p.$hidden && "visibility: hidden;"}
`;

const HScroll = styled.div`
  flex: none;
  display: flex;
  align-items: center;
  height: 19px;
  margin-top: auto;
  margin-bottom: 4px;
  padding: 0 4px;
  background: #ececed;

  > ${Caret} { border-width: 5px 5px 0; }
  > :first-child { transform: rotate(90deg); }
  > :last-child { transform: rotate(-90deg); margin-left: auto; }
`;

const HThumb = styled.span`
  width: 45px;
  height: 18px;
  margin-left: 7px;
  border: 1px solid #8c8f94;
  border-radius: 2px;
  background:
    repeating-linear-gradient(90deg, #5c5f64 0 1px, transparent 1px 4px) center / 10px 8px no-repeat,
    linear-gradient(#f5f5f6, #cfd1d4);
`;

const Viewport = styled.section`
  position: relative;
  flex: 1;
  min-width: 0;
  display: flex;
  flex-direction: column;
  background: #fdfdfe;
  border-right: 1px solid #5b5e66;
`;

const SceneSvg = styled.svg`
  position: absolute;
  inset: 0;
  width: 100%;
  height: 100%;
`;

const ViewBar = styled.div`
  position: relative;
  display: flex;
  align-items: center;
  height: 27px;
  padding: 0 9px 0 547px;
`;

const ViewTools = styled.div`
  display: flex;
  align-items: center;
  gap: 7px;

  ${Caret} { margin: 2px 1px 0 0; border-top-color: #6b6e73; }
`;

const ViewWindow = styled(WindowButtons)`
  margin-left: auto;
  opacity: 0.75;
`;

const ViewName = styled.p`
  position: relative;
  margin: auto 0 0 12px;
  font-family: "Liberation Serif", serif;
  font-size: 18px;
  line-height: 21px;
`;

const Splitter = styled.span`
  position: absolute;
  left: -2px;
  top: 415px;
  width: 9px;
  height: 39px;
  border: 1px solid #333;
  background:
    repeating-linear-gradient(transparent 0 3px, #333 3px 6px, transparent 6px 9px) center / 3px 27px no-repeat,
    #eef0f3;
`;

const ResizeCursor = styled(Svg)`
  position: absolute;
  left: -20px;
  bottom: 36px;
`;

const SideTabs = styled.nav`
  position: absolute;
  right: -1px;
  top: 59px;
  display: flex;
  flex-direction: column;
`;

const SideTab = styled.button<{ $active?: boolean }>`
  display: flex;
  align-items: center;
  justify-content: center;
  width: 25px;
  height: 24px;
  border: 1px solid #17181a;
  border-top-color: #dfe1e4;
  background: ${(p) => (p.$active ? "#f1f2f6" : "#a9abaf")};
`;

const SheetTabs = styled.nav`
  flex: none;
  display: flex;
  height: 20px;
  padding-left: 2px;
  border-top: 1px solid #17181a;
  background: #e2e5ea;
`;

const SheetNav = styled.button`
  width: 20px;
  border: 1px solid #8c8a9e;
  background: #b3b2c6;
  color: #7d7c92;
  font-size: 11px;
  line-height: 16px;
`;

const SheetTab = styled.button<{ $active?: boolean; $w: number }>`
  width: ${(p) => p.$w}px;
  border: 1px solid #3b3b4b;
  border-width: 0 2px 2px 1px;
  background: ${(p) => (p.$active ? "#d5d9e6" : "#b9bacd")};
  font-size: 15px;
  line-height: 17px;
  text-align: center;
  white-space: nowrap;
  color: #111;
  ${(p) => p.$active && "font-weight: 700; margin-left: 4px;"}
`;

/* ---------- task pane ---------- */

const TaskPane = styled.aside`
  flex: none;
  display: flex;
  flex-direction: column;
  width: 336px;
  border-left: 2px solid #1c1d20;
  background: #e2e5ea;
`;

const PaneHeader = styled.div`
  flex: none;
  display: flex;
  align-items: center;
  height: 24px;
  padding: 0 4px 0 9px;
  border-bottom: 1px solid #17181a;
  background: #abadb1;

  > button { font-size: 20px; line-height: 14px; margin-bottom: 8px; }
  h2 { flex: 1; text-align: center; font-size: 18px; line-height: 22px; }
`;

const PaneBody = styled.div`
  flex: 1;
  min-height: 0;
  display: flex;
  overflow: hidden;
`;

const PaneContent = styled.div`
  flex: 1;
  display: flex;
  flex-direction: column;
  gap: 28px;
  padding: 5px 12px 0;
`;

const Card = styled.section`
  flex: none;
  border: 1px solid #17181a;
  background: #d7dade;
  color: #10104a;
  font-size: 12px;

  h2 {
    display: flex;
    justify-content: space-between;
    align-items: center;
    height: 23px;
    padding: 0 4px 0 5px;
    border-bottom: 1px solid #17181a;
    background: #abadb1;
    color: #41444c;
    font-size: 12px;
  }
  ul { padding-bottom: 1px; }
`;

const Resource = styled.li<{ $raised?: boolean; $tall?: boolean }>`
  a {
    display: flex;
    align-items: ${(p) => (p.$raised || p.$tall ? "flex-start" : "center")};
    gap: 4px;
    min-height: ${(p) => (p.$tall ? 42 : 32)}px;
    padding: ${(p) => (p.$tall ? 3 : 2)}px 20px 0 3px;
    line-height: 17px;
  }
  span { padding-top: ${(p) => (p.$raised ? 7 : 0)}px; }
`;

const News = styled.li`
  a {
    display: flex;
    align-items: center;
    gap: 3px;
    padding: 0 16px 3px 22px;
    color: #3a6ea5;
    line-height: 17px;
  }
  a::before {
    content: "";
    flex: none;
    width: 4px;
    height: 4px;
    border: solid #f57c12;
    border-width: 1px 1px 0 0;
    transform: rotate(45deg);
  }
`;

const VScroll = styled.div`
  flex: none;
  display: flex;
  flex-direction: column;
  align-items: center;
  justify-content: space-between;
  width: 14px;
  padding: 7px 0;
  background: #efeff0;
`;

const VThumb = styled.span`
  width: 14px;
  height: 526px;
  margin: 8px 0 auto;
  border: 1px solid #8c8f94;
  background:
    repeating-linear-gradient(#5c5f64 0 1px, transparent 1px 4px) center / 9px 9px no-repeat,
    linear-gradient(90deg, #f5f5f6, #cfd1d4);
`;

/* ---------- status bar and taskbar ---------- */

const StatusBar = styled.footer`
  flex: none;
  display: flex;
  align-items: center;
  height: 26px;
  padding: 0 6px 0 2px;
  border-top: 1px solid #17181a;
  box-shadow: inset 0 2px #f1f1f4;
  font-size: 14px;

  > :nth-child(2) { margin-left: auto; }
  > :nth-child(3) { margin: 0 80px 0 36px; }
  > svg { margin-bottom: 6px; }
`;

const Taskbar = styled.nav`
  position: relative;
  flex: none;
  display: flex;
  align-items: stretch;
  height: 34px;
  padding-left: 70px;
  gap: 4px;
  color: #fff;
  border-top: 1px solid #29323d;
  box-shadow: inset 0 1px #8296a8;
  background:
    linear-gradient(100deg, transparent 39%, #8fb0cf44 40%, transparent 41%) no-repeat,
    linear-gradient(100deg, transparent 43%, #8fb0df88 44%, transparent 45%) no-repeat,
    linear-gradient(90deg, transparent 47%, #8fb4e6aa 48%, transparent 49%) no-repeat,
    linear-gradient(80deg, transparent 51%, #8fb4e677 52%, transparent 53%) no-repeat,
    linear-gradient(80deg, transparent 53%, #8fb4e666 54%, transparent 55%) no-repeat,
    linear-gradient(80deg, transparent 60%, #7f98a866 61%, transparent 62%) no-repeat,
    linear-gradient(90deg, #343b42 0, #454e57 16%, #5c6b79 20%, #7a97b6 26%, #6f89a4 34%, #64747c 40%, #6a7d88 50%, #525a60 58%, #33363a 62%, #2e3135 66%, #4a525b 76%, #59636d 82%, #47505a 85%, #1c2128 89%, #20242a 100%);
`;

const StartButton = styled.button`
  position: absolute;
  left: 11px;
  top: -8px;
  width: 43px;
  height: 42px;
`;

const Pinned = styled.button`
  display: flex;
  align-items: center;
  justify-content: center;
  width: 48px;
`;

const Task = styled(Pinned)<{ $active?: boolean }>`
  width: 46px;
  margin-top: 1px;
  border: 1px solid #b9bfc6;
  border-radius: 3px;
  background: ${(p) =>
    p.$active
      ? "linear-gradient(120deg, #dcdedf, #a6a8ab 50%, #b7b9bc)"
      : "linear-gradient(120deg, #a4a8ad, #60656b 50%, #5a5f66)"};
`;

const Tray = styled.div`
  display: flex;
  align-items: center;
  gap: 13px;
  margin-left: auto;
  font-size: 14px;
`;

const Lang = styled.span`
  margin: 0 10px 5px 0;
`;

const UpArrow = styled(Caret)`
  margin-right: 5px;
`;

const Clock = styled.time`
  margin-left: 7px;
`;

const ShowDesktop = styled.button`
  align-self: stretch;
  width: 14px;
  border: 1px solid #6f757c;
  background: linear-gradient(#5a6068, #16191d 60%);
`;

/* ---------- model ---------- */

const wallFill = "#94867a";
const floorFill = "#a99a8b";
const sideFill = "#5c5249";
const edge = { stroke: "#15110e", strokeWidth: 1.2, strokeLinejoin: "round" as const };

const LeftBay = ({ x, y, first }: { x: number; y: number; first?: boolean }) => {
  const l = first ? -4.5 : 0;
  const t = first ? -2.7 : 0;
  const b = first ? 100.3 : 98.3;
  return (
    <g transform={`translate(${x} ${y})`}>
      <path d={`M${l} ${t}L95.3 55L${l} ${b}z`} fill={sideFill} />
      <path d={`M${l} ${t}L${first ? 61 : 65} 36V63L${l} ${b}z`} fill={wallFill} {...edge} />
      <g stroke="#a0785c" opacity=".25" strokeWidth="2">
        <path d="M20 14V88M46 28V72" />
      </g>
      <path d={`M${l} ${b}L86.700 50.700L95.300 55z`} fill="#b0a192" {...edge} />
      <path d={`M${l} ${t}L95.3 55L${l} ${b}z`} fill="none" {...edge} />
      <path d="M1.700 111.700L98 67.700V166.700z" fill={floorFill} {...edge} />
      <g stroke="#b08468" opacity=".3" strokeWidth="2" fill="none">
        <path d="M40 99Q70 110 97 128M22 107Q60 124 97 152" />
      </g>
      <path d="M75 78L98 67.700V91.300z" fill={sideFill} {...edge} />
    </g>
  );
};

const RightBay = ({ x, y, last }: { x: number; y: number; last?: boolean }) => {
  const r = last ? 102 : 97;
  const dy = last ? 3 : 0;
  return (
    <g transform={`translate(${x} ${y})`}>
      <path d="M0 0L94 152L0 98z" fill={floorFill} {...edge} />
      <path d="M0 0L44.500 72L0 97.500z" fill={wallFill} {...edge} />
      <g stroke="#b08468" opacity=".3" strokeWidth="2" fill="none">
        <path d="M22 38V82M22 90Q45 98 66 112M10 98Q45 112 80 136" />
      </g>
      <path d={`M2.800 -10.300L${r} ${43.7 + dy}V${143 + dy * 2}z`} fill="#a8988a" {...edge} />
      <g stroke="#b08468" opacity=".3" strokeWidth="2" fill="none">
        <path d="M26 8Q50 60 92 116M54 22Q70 50 95 84" />
      </g>
    </g>
  );
};

const grain = Array.from({ length: 10 }, (_, i) => {
  const x = -420 + i * 190;
  const y = 267 + 0.5764 * (x - 416);
  return `M${x} ${y}q150 62 300 142t280 128t320 158`;
}).join("");

const Model = () => (
  <SceneSvg viewBox="190 131 1393 869" preserveAspectRatio="xMidYMid slice" role="img" aria-label="Фанерная балка">
    <defs>
      <linearGradient id="horizon" x1="0" y1="131" x2="0" y2="1000" gradientUnits="userSpaceOnUse">
        <stop offset="0" stopColor="#ffffff" stopOpacity="0" />
        <stop offset=".38" stopColor="#f6f7fa" stopOpacity=".1" />
        <stop offset=".53" stopColor="#e2e5ee" stopOpacity=".9" />
        <stop offset=".58" stopColor="#eaecf3" />
        <stop offset=".66" stopColor="#fbfbfc" />
        <stop offset=".9" stopColor="#fefefe" />
        <stop offset="1" stopColor="#f8f9fb" />
      </linearGradient>
      <radialGradient id="sky">
        <stop offset="0" stopColor="#d5d9e5" />
        <stop offset=".45" stopColor="#dadeea" stopOpacity=".85" />
        <stop offset="1" stopColor="#f4f5f9" stopOpacity="0" />
      </radialGradient>
      <linearGradient id="shade" x1="0" y1="110" x2="-54" y2="204" gradientUnits="userSpaceOnUse">
        <stop offset="0" stopColor="#8b8a8f" stopOpacity=".62" />
        <stop offset="1" stopColor="#b4b4ba" stopOpacity="0" />
      </linearGradient>
      <linearGradient id="beige" x1="0" y1="110" x2="-52" y2="200" gradientUnits="userSpaceOnUse">
        <stop offset="0" stopColor="#a59c94" stopOpacity=".62" />
        <stop offset=".45" stopColor="#cfc9c4" stopOpacity=".4" />
        <stop offset="1" stopColor="#e6e2de" stopOpacity="0" />
      </linearGradient>
      <linearGradient id="strut" x1="97" y1="178" x2="12" y2="222" gradientUnits="userSpaceOnUse">
        <stop offset="0" stopColor="#a7a4a3" stopOpacity=".45" />
        <stop offset="1" stopColor="#c4c2c1" stopOpacity=".1" />
      </linearGradient>
      <linearGradient id="endFade" x1="0" y1="870" x2="0" y2="1000" gradientUnits="userSpaceOnUse">
        <stop offset="0" stopColor="#a79c93" stopOpacity=".65" />
        <stop offset="1" stopColor="#d8d4d0" stopOpacity="0" />
      </linearGradient>
      <clipPath id="topFace">
        <path d="M416 267.300L489.700 224L1361 727.300L1287 769.300z" />
      </clipPath>
      <linearGradient id="green">
        <stop stopColor="#0d4d12" />
        <stop offset=".5" stopColor="#33a03c" />
        <stop offset="1" stopColor="#0d4d12" />
      </linearGradient>
    </defs>
    <rect x="190" y="131" width="1393" height="869" fill="#fefefe" />
    <ellipse cx="1240" cy="170" rx="420" ry="320" fill="url(#sky)" opacity=".6" />
    <ellipse cx="1370" cy="500" rx="680" ry="360" fill="url(#sky)" />
    <rect x="190" y="131" width="1393" height="869" fill="url(#horizon)" />

    <g transform="translate(429 285.200)">
      <path d="M-13 113H-4.500V232H-13z" fill="url(#shade)" />
    </g>
    {[0, 1, 2, 3].map((i) => (
      <g key={i} transform={`translate(${429 + i * 106.7} ${285.2 + i * 61.5})`}>
        <path d="M-4 108L98 166V290H-4z" fill="url(#beige)" opacity=".55" />
        <path d="M-4 112L98 171V290L86 282L-4 128z" fill="url(#shade)" />
        <path d="M98 166L107 171V300H98z" fill="url(#shade)" opacity=".8" />
      </g>
    ))}
    {[0, 1, 2, 3].map((i) => (
      <g key={i} transform={`translate(${856.2 + i * 106.7} ${543.7 + i * 61.4})`}>
        <path d="M0 108L97 164V186L6 228L0 222z" fill="url(#beige)" />
        <path d="M97 172V186L6 228L0 218z" fill="url(#strut)" />
        <path d="M97 164L107 170V296H97z" fill="url(#shade)" opacity=".75" />
      </g>
    ))}
    <path d="M1287 900L1361 858V1000H1287z" fill="url(#endFade)" />
    <path d="M1280 896L1287 900V1000H1280z" fill="url(#endFade)" />

    <path d="M416 267.300L489.700 224L1361 727.300L1287 769.300z" fill="#a99a8b" {...edge} />
    <g clipPath="url(#topFace)">
      <path d={grain} fill="none" stroke="#b58a6c" strokeWidth="2" opacity=".32" />
    </g>
    <path d="M1287 769.300L1361 727.300V858L1287 900z" fill="#918376" {...edge} />
    <path d="M1296 766V894M1319 754V880M1343 740V866" stroke="#a0785c" opacity=".4" strokeWidth="2" />
    <path d="M416 267.300L1287 769.300V900L416 398z" fill={sideFill} {...edge} />
    {[0, 1, 2, 3].map((i) => (
      <LeftBay key={i} x={429 + i * 106.7} y={285.2 + i * 61.5} first={i === 0} />
    ))}
    {[0, 1, 2, 3].map((i) => (
      <RightBay key={i} x={856.2 + i * 106.7} y={543.7 + i * 61.4} last={i === 3} />
    ))}

    <g>
      <path d="M240 932L222 941" stroke="#1c1cb4" strokeWidth="5" />
      <path d="M240 932L258 941" stroke="#a81616" strokeWidth="5" />
      <path d="M237.500 912h5v20h-5z" fill="#156b1b" />
      <path d="M240 901l6 10q-6 5-12 0z" fill="url(#green)" />
      <path d="M213 948l7-10 6 9z" fill="#2a2ae0" stroke="#12127c" strokeWidth=".8" />
      <path d="M267 948l-7-10-6 9z" fill="#e02a2a" stroke="#7c1212" strokeWidth=".8" />
      <g fontFamily="Liberation Serif, serif" fontSize="15">
        <text x="236.500" y="901" fill="#0a8a14">Y</text>
        <text x="206" y="954" fill="#1a1af0">Z</text>
        <text x="265" y="954" fill="#f01a1a">X</text>
      </g>
    </g>
  </SceneSvg>
);

/* ---------- data ---------- */

const quick = ["newDoc:Создать", "open:Открыть", "save:Сохранить", "print:Печать", "undo:Отменить"];

const sweeps: [string, string][] = [
  ["sweep", "Бобышка/основание по траектории"],
  ["loft", "Бобышка/основание по сечениям"],
  ["boundary", "Бобышка/основание на границе"],
];
const cuts: [string, string][] = [
  ["sweepCut", "Вырез по траектории"],
  ["loftCut", "Вырез по сечениям"],
  ["boundaryCut", "Вырез по границе"],
];
const solids: [string, string][] = [["rib", "Ребро"], ["draft", "Уклон"], ["shell", "Оболочка"]];
const shapes: [string, string][] = [["wrap", "Перенос"], ["dome", "Купол"], ["mirror", "Зеркальное отражение"]];

const tree: [string, string, boolean][] = [
  ["history", "История", true],
  ["sensors", "Датчики", false],
  ["notes", "Примечания", true],
  ["material", "Фанера", false],
  ["plane", "Спереди", false],
  ["plane", "Сверху", false],
  ["plane", "Справа", false],
  ["origin", "Исходная точка", false],
  ["feature", "Бобышка-Вытянуть1", true],
  ["featureOff", "Бобышка-Вытянуть2", true],
  ["feature", "Бобышка-Вытянуть3", true],
];

const intro: [string, string][] = [
  ["newDoc", "Создать документ"],
  ["open", "Открыть документ"],
  ["hat", "Учебные пособия"],
  ["whatsNew", "Новые возможности"],
  ["intro", "Знакомство с SolidWorks"],
  ["info", "Общая информация"],
];
const tools: [string, string][] = [
  ["ptb", "Property Tab Builder"],
  ["rx", "SolidWorks Rx"],
  ["rx", "Проверка производительности"],
  ["compare", "Сравнить мои результаты"],
  ["wizard", "Помощник копирования настроек"],
];
const community: [string, string][] = [
  ["portal", "Портал клиентов"],
  ["groups", "Группы пользователей"],
  ["forum", "Форум для обсуждения"],
];
const news = [
  "Enterprise PDM 2015 Beta2 is available for do...",
  "SolidWorks 2015 Beta2 is available for download",
  "SOLIDWORKS Forum update",
  "2014 SOLIDWORKS Customer Satisfaction Survey",
  "Enterprise PDM 2014 SP4 is available for down...",
  "SolidWorks 2014 SP4 is available for download",
  "SOLIDWORKS Hole Wizard and Toolbox cannot be ...",
];

const viewTools = ["zoomFit", "zoomArea", "prevView", "section", "orient>", "display>", "glasses>", "ball", "scene>", "viewSet>"];
const sideTabs = ["chat", "house", "library", "folder", "palette", "ball", "props"];

/* ---------- pieces ---------- */

const Commands = ({ items, w }: { items: [string, string][]; w: number }) => (
  <CommandList $w={w}>
    {items.map(([icon, label]) => (
      <li key={label}>
        <CommandButton>
          <Icon name={icon} />
          {label}
        </CommandButton>
      </li>
    ))}
  </CommandList>
);

const Big = ({ icon, lines, w, menu, pressed }: { icon: string; lines: string[]; w: number; menu?: boolean; pressed?: boolean }) => (
  <BigButton $w={w} $menu={menu} $pressed={pressed} aria-pressed={pressed}>
    <Icon name={icon} />
    <span>
      {lines.map((l, i) => (
        <React.Fragment key={l}>
          {i > 0 && <br />}
          {l}
        </React.Fragment>
      ))}
    </span>
    {menu && <Caret />}
  </BigButton>
);

const Collapse = () => (
  <Svg width="9" height="10" viewBox="0 0 9 10" aria-hidden="true">
    <path d="M1 5l3.500-3.500L8 5M1 9l3.500-3.500L8 9" fill="none" stroke="#50557c" strokeWidth="1.200" />
  </Svg>
);

export default function App() {
  return (
    <Frame>
      <GlobalStyle />
      <TitleBar>
        <Brand>
          <Svg width="21" height="22" viewBox="0 0 21 22" aria-hidden="true">
            <g fill="none" stroke="#fff" strokeWidth="1.800">
              <path d="M5 2C9 0 13 1 11.500 3.500 10.500 5.500 8 6.500 6 7.500" />
              <path d="M1 10.500c8-2.500 10-.5 8.500 3.500C8 18 5 20 .8 20L4 12" />
              <path d="M20 9.500c-5-1.500-7.500.5-5.500 3.500s2 6.500-5 6.500" />
            </g>
          </Svg>
          <span><b>SOLID</b>WORKS</span>
        </Brand>
        <BrandArrow aria-label="Меню"><Caret /></BrandArrow>
        <QuickBar>
          {quick.map((q) => {
            const [icon, label] = q.split(":");
            return (
              <React.Fragment key={icon}>
                <QuickButton aria-label={label}><Icon name={icon} size={17} /></QuickButton>
                <QuickCaret aria-label={label + ", меню"}><Caret /></QuickCaret>
              </React.Fragment>
            );
          })}
          <QuickButton $pressed aria-label="Выбрать"><Icon name="cursor" /></QuickButton>
          <QuickCaret $pressed aria-label="Выбрать, меню"><Caret /></QuickCaret>
          <QuickButton aria-label="Перестроить"><Icon name="traffic" /></QuickButton>
          <QuickButton aria-label="Свойства файла"><Icon name="props" /></QuickButton>
          <QuickButton aria-label="Параметры"><Icon name="options" /></QuickButton>
          <QuickCaret aria-label="Параметры, меню"><Caret /></QuickCaret>
        </QuickBar>
        <DocTitle>фанерная балка2.SLDPRT *</DocTitle>
        <SearchBox>
          <Icon name="helpBubble" />
          <input aria-label="Поиск в Справке" placeholder="Поиск в Справке по SolidWorks" />
          <Icon name="lens" />
          <Caret />
        </SearchBox>
        <AppButtons $gap={8}>
          <button aria-label="Справка"><Icon name="question" size={14} /></button>
          <Caret />
          <button aria-label="Свернуть"><Icon name="min" /></button>
          <button aria-label="Восстановить"><Icon name="restore" /></button>
          <button aria-label="Закрыть"><Icon name="close" /></button>
        </AppButtons>
      </TitleBar>

      <Ribbon>
        <Big icon="boss" lines={["Вытянутая", "бобышка/основание"]} w={141} />
        <Big icon="revolve" lines={["Повернутая", "бобышка/основание"]} w={143} />
        <Commands items={sweeps} w={267} />
        <Divider $gap={4} />
        <Big icon="cut" lines={["Вытянутый", "вырез"]} w={77} />
        <Big icon="hole" lines={["Отверстие", "под", "крепеж"]} w={79} />
        <Big icon="revCut" lines={["Повернутый", "вырез"]} w={88} />
        <Commands items={cuts} w={176} />
        <Divider $gap={3} />
        <Big icon="fillet" lines={["Скругление"]} w={80} menu />
        <Big icon="pattern" lines={["Линейный", "массив"]} w={80} menu />
        <Commands items={solids} w={105} />
        <Commands items={shapes} w={186} />
        <Divider $gap={3} />
        <Big icon="refGeom" lines={["Справочная", "геометрия"]} w={84} menu />
        <Big icon="curves" lines={["Кривые"]} w={61} menu />
        <Divider $gap={2} />
        <Big icon="instant" lines={["Instant", "3D"]} w={53} pressed />
      </Ribbon>

      <WorkArea>
        <DocumentArea>
          <CommandTabs>
            <CommandTab $active>Элементы</CommandTab>
            <CommandTab>Эскиз</CommandTab>
            <CommandTab>Анализировать</CommandTab>
            <CommandTab>DimXpert</CommandTab>
            <CommandTab>Продукты Office</CommandTab>
          </CommandTabs>
          <DocumentRow>
            <TreePanel>
              <ManagerTabs>
                <ManagerTab $active aria-label="Дерево конструирования"><Icon name="part" /></ManagerTab>
                <ManagerTab aria-label="Свойства"><Icon name="props" /></ManagerTab>
                <ManagerTab aria-label="Конфигурации"><Icon name="config" /></ManagerTab>
                <ManagerTab aria-label="Размеры"><Icon name="target" /></ManagerTab>
                <ManagerTab aria-label="Отображение"><Icon name="ballDark" /></ManagerTab>
                <span>»</span>
              </ManagerTabs>
              <FilterBox>
                <Icon name="filter" />
                <input aria-label="Фильтр дерева" />
              </FilterBox>
              <Tree>
                <TreeRoot>
                  <Icon name="part" />
                  <span>фанерная балка2&nbsp; (По у</span>
                </TreeRoot>
                {tree.map(([icon, label, open]) => (
                  <TreeItem key={label} $muted={icon === "featureOff"}>
                    <Expander $hidden={!open} aria-label={"Развернуть " + label} />
                    <Icon name={icon} />
                    {label}
                  </TreeItem>
                ))}
              </Tree>
              <HScroll>
                <Caret />
                <HThumb />
                <Caret />
              </HScroll>
            </TreePanel>
            <Viewport>
              <Model />
              <ViewBar>
                <ViewTools>
                  {viewTools.map((t) => {
                    const name = t.replace(">", "");
                    return (
                      <React.Fragment key={t}>
                        <button aria-label={name}><Icon name={name} /></button>
                        {t.endsWith(">") && <Caret />}
                      </React.Fragment>
                    );
                  })}
                </ViewTools>
                <ViewWindow $gap={7}>
                  <button aria-label="Панель слева"><Icon name="paneLeft" /></button>
                  <button aria-label="Панель справа"><Icon name="paneRight" /></button>
                  <button aria-label="Свернуть документ"><Icon name="min" /></button>
                  <button aria-label="Восстановить документ"><Icon name="restore" /></button>
                  <button aria-label="Закрыть документ"><Icon name="close" /></button>
                </ViewWindow>
              </ViewBar>
              <ViewName>*Изометрия</ViewName>
              <Splitter />
              <ResizeCursor width="30" height="16" viewBox="0 0 30 16" aria-hidden="true">
                <path d="M10.500 1.500v13L1 8zM19.500 1.500v13L29 8z" fill="#f4f5f7" stroke="#b4b7bc" />
              </ResizeCursor>
              <SideTabs>
                {sideTabs.map((t) => (
                  <SideTab key={t} $active={t === "house"} aria-label={t}><Icon name={t} /></SideTab>
                ))}
              </SideTabs>
            </Viewport>
          </DocumentRow>
          <SheetTabs>
            <SheetNav aria-label="Первая">|◀</SheetNav>
            <SheetNav aria-label="Назад">◀</SheetNav>
            <SheetNav aria-label="Вперёд">▶</SheetNav>
            <SheetNav aria-label="Последняя">▶|</SheetNav>
            <SheetTab $active $w={86}>Модель</SheetTab>
            <SheetTab $w={238}>Исследование движения 1</SheetTab>
          </SheetTabs>
        </DocumentArea>

        <TaskPane>
          <PaneHeader>
            <button aria-label="Свернуть панель">«</button>
            <h2>Ресурсы SolidWorks</h2>
            <Icon name="pin" />
          </PaneHeader>
          <PaneBody>
            <PaneContent>
              <Card>
                <h2>Введение<Collapse /></h2>
                <ul>
                  {intro.map(([icon, label]) => (
                    <Resource key={label} $raised={icon === "info"}>
                      <a href="#"><Icon name={icon} /><span>{label}</span></a>
                    </Resource>
                  ))}
                </ul>
              </Card>
              <Card>
                <h2>Инструменты SolidWorks<Collapse /></h2>
                <ul>
                  {tools.map(([icon, label]) => (
                    <Resource key={label} $raised>
                      <a href="#"><Icon name={icon} /><span>{label}</span></a>
                    </Resource>
                  ))}
                </ul>
              </Card>
              <Card>
                <h2>Сообщество<Collapse /></h2>
                <ul>
                  {community.map(([icon, label]) => (
                    <Resource key={label} $raised>
                      <a href="#"><Icon name={icon} /><span>{label}</span></a>
                    </Resource>
                  ))}
                  <Resource $tall>
                    <a href="#"><Icon name="rss" /><span>Предупреждения по технической поддержке и последние новости</span></a>
                  </Resource>
                  {news.map((n) => (
                    <News key={n}><a href="#">{n}</a></News>
                  ))}
                </ul>
              </Card>
            </PaneContent>
            <VScroll>
              <Caret $up />
              <VThumb />
              <Caret />
            </VScroll>
          </PaneBody>
        </TaskPane>
      </WorkArea>

      <StatusBar>
        <span>SolidWorks Premium 2014 x64 Edition</span>
        <span>ММГС</span>
        <Caret $up />
        <Icon name="tag" />
      </StatusBar>

      <Taskbar>
        <StartButton aria-label="Пуск">
          <Svg width="43" height="42" viewBox="0 0 43 42">
            <defs>
              <radialGradient id="orb" cy=".85">
                <stop stopColor="#4fe0f8" />
                <stop offset=".5" stopColor="#1c78b4" />
                <stop offset="1" stopColor="#123a66" />
              </radialGradient>
            </defs>
            <circle cx="21.500" cy="21.500" r="20.500" fill="url(#orb)" stroke="#26486a" />
            <path d="M4 17a18 18 0 0 1 35 0q-17 8-35 0z" fill="#fff" opacity=".3" />
            <path d="M12 11q5-3 9 0l-2 9q-4-3-9 0z" fill="#f0592b" />
            <path d="M23 12q4 3 10 0l-3 9q-5 3-9 0z" fill="#8cc63f" />
            <path d="M9.500 22q5-3 9 0l-2 8q-4-3-9 0z" fill="#3fa9f5" />
            <path d="M20.500 23q4 3 9 0l-2 8q-5 3-9 0z" fill="#fcc52c" />
          </Svg>
        </StartButton>
        <Pinned aria-label="Проводник"><Icon name="explorer" size={20} /></Pinned>
        <Task aria-label="Chrome"><Icon name="chrome" size={18} /></Task>
        <Task $active aria-label="SolidWorks"><Icon name="sw" size={20} /></Task>
        <Task aria-label="Калькулятор"><Icon name="calc" size={18} /></Task>
        <Task aria-label="Paint"><Icon name="paint" size={18} /></Task>
        <Tray>
          <Lang>EN</Lang>
          <UpArrow $up $light />
          <Icon name="flag" size={18} />
          <Icon name="network" size={18} />
          <Icon name="drive" size={18} />
          <Clock>21:05</Clock>
          <ShowDesktop aria-label="Показать рабочий стол" />
        </Tray>
      </Taskbar>
    </Frame>
  );
}
